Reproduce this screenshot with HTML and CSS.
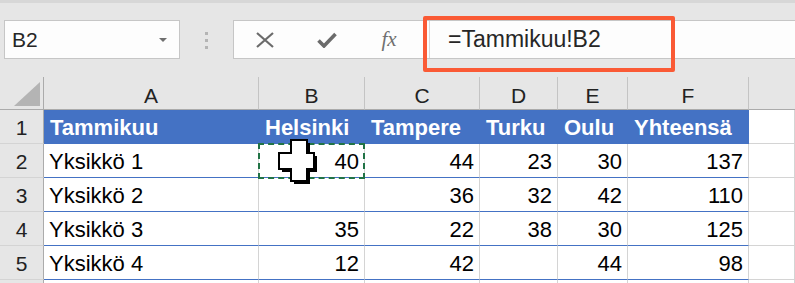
FILE: index.html
```html
<!DOCTYPE html>
<html lang="fi">
<head>
    <meta charset="UTF-8">
    <meta name="viewport" content="width=device-width, initial-scale=1.0">
    <title>Tammikuu</title>
    <link rel="stylesheet" href="styles.css">
</head>
<body>
<div class="app">
    <!-- Formula bar -->
    <div class="toolbar">
        <div class="name-box">
            <span>B2</span>
            <span class="caret"></span>
        </div>
        <div class="grip">
            <span></span><span></span><span></span>
        </div>
        <div class="formula-box">
            <div class="fbtn">
                <svg width="18" height="16" viewBox="0 0 18 16"><path d="M1 1 L17 15 M17 1 L1 15" stroke="#6b6b6b" stroke-width="2.2" fill="none"/></svg>
            </div>
            <div class="fbtn">
                <svg width="20" height="16" viewBox="0 0 20 16"><path d="M1.5 8.5 L7 14 L18.5 2" stroke="#6b6b6b" stroke-width="3.6" fill="none"/></svg>
            </div>
            <div class="fbtn fx">fx</div>
            <div class="formula-input">=Tammikuu!B2</div>
        </div>
    </div>

    <!-- Sheet -->
    <div class="grid">
        <div class="cell corner"><span class="tri"></span></div>
        <div class="cell col-head">A</div>
        <div class="cell col-head">B</div>
        <div class="cell col-head">C</div>
        <div class="cell col-head">D</div>
        <div class="cell col-head">E</div>
        <div class="cell col-head">F</div>
        <div class="cell col-head last"></div>

        <div class="cell row-head">1</div>
        <div class="cell th">Tammikuu</div>
        <div class="cell th">Helsinki</div>
        <div class="cell th">Tampere</div>
        <div class="cell th">Turku</div>
        <div class="cell th">Oulu</div>
        <div class="cell th">Yhteensä</div>
        <div class="cell"></div>

        <div class="cell row-head">2</div>
        <div class="cell td">Yksikkö 1</div>
        <div class="cell td num">40</div>
        <div class="cell td num">44</div>
        <div class="cell td num">23</div>
        <div class="cell td num">30</div>
        <div class="cell td num">137</div>
        <div class="cell"></div>

        <div class="cell row-head">3</div>
        <div class="cell td">Yksikkö 2</div>
        <div class="cell td num"></div>
        <div class="cell td num">36</div>
        <div class="cell td num">32</div>
        <div class="cell td num">42</div>
        <div class="cell td num">110</div>
        <div class="cell"></div>

        <div class="cell row-head">4</div>
        <div class="cell td">Yksikkö 3</div>
        <div class="cell td num">35</div>
        <div class="cell td num">22</div>
        <div class="cell td num">38</div>
        <div class="cell td num">30</div>
        <div class="cell td num">125</div>
        <div class="cell"></div>

        <div class="cell row-head">5</div>
        <div class="cell td">Yksikkö 4</div>
        <div class="cell td num">12</div>
        <div class="cell td num">42</div>
        <div class="cell td num"></div>
        <div class="cell td num">44</div>
        <div class="cell td num">98</div>
        <div class="cell"></div>

        <div class="cell row-head"></div>
        <div class="cell"></div>
        <div class="cell"></div>
        <div class="cell"></div>
        <div class="cell"></div>
        <div class="cell"></div>
        <div class="cell"></div>
        <div class="cell"></div>
    </div>

    <!-- Overlays -->
    <div class="highlight"></div>
    <svg class="cursor" width="46" height="52" viewBox="0 0 46 52">
        <polygon points="18,6 34,6 34,19 41,19 41,35 34,35 34,47 18,47 18,35 6,35 6,19 18,19" fill="#000"/>
        <polygon points="15,3 31,3 31,16 38,16 38,32 31,32 31,44 15,44 15,32 3,32 3,16 15,16" fill="#fff" stroke="#000" stroke-width="2"/>
    </svg>
</div>
</body>
</html>
```

FILE: styles.css
```css
* {
    box-sizing: border-box;
}

body {
    margin: 0;
    background-color: #e6e6e6;
    font-family: "Liberation Sans", Arial, sans-serif;
    overflow: hidden;
}

.app {
    position: relative;
    width: 795px;
    height: 283px;
    overflow: hidden;
}

/* Formula bar */
.toolbar {
    display: flex;
    align-items: flex-start;
    height: 77px;
    padding: 17px 0 0 4px;
    border-top: 3px solid #d7d7d7;
}

.name-box {
    display: flex;
    align-items: center;
    justify-content: space-between;
    width: 176px;
    height: 39px;
    padding: 0 12px 0 7px;
    background-color: #fdfdfd;
    border: 1px solid #c6c6c6;
    font-size: 21px;
    color: #262626;
}

.caret {
    width: 0;
    height: 0;
    border-left: 4px solid transparent;
    border-right: 4px solid transparent;
    border-top: 4px solid #6f6f6f;
}

.grip {
    display: flex;
    flex-direction: column;
    align-items: center;
    gap: 4px;
    width: 53px;
    padding-top: 12px;
}

.grip span {
    width: 3px;
    height: 3px;
    background-color: #b4b4b4;
}

.formula-box {
    display: flex;
    align-items: center;
    flex: 1;
    height: 39px;
    margin-right: -4px;
    background-color: #fdfdfd;
    border: 1px solid #c6c6c6;
}

.fbtn {
    display: flex;
    align-items: center;
    justify-content: center;
    width: 62px;
    height: 100%;
}

.fx {
    width: 71px;
    padding-right: 9px;
    font-family: "Liberation Serif", "Times New Roman", serif;
    font-style: italic;
    font-size: 21px;
    color: #707070;
}

.formula-input {
    flex: 1;
    height: 100%;
    padding-left: 18px;
    border-left: 1px solid #d9d9d9;
    font-size: 23px;
    line-height: 37px;
    color: #262626;
}

/* Sheet grid */
.grid {
    display: grid;
    grid-template-columns: 44px 215px 106px 115px 78px 70px 121px 1fr;
    grid-template-rows: 33px repeat(6, 34px);
}

.cell {
    padding: 2px 5px 0;
    background-color: #fff;
    border-right: 1px solid #d4d4d4;
    border-bottom: 1px solid #d4d4d4;
    font-size: 22px;
    line-height: 32px;
    white-space: nowrap;
    overflow: hidden;
    color: #000;
}

.corner {
    display: flex;
    justify-content: flex-end;
    align-items: flex-end;
    padding: 0 3px 3px 0;
    background-color: #e6e6e6;
    border-right-color: #ababab;
    border-bottom-color: #ababab;
}

.tri {
    width: 0;
    height: 0;
    border-left: 26px solid transparent;
    border-bottom: 24px solid #b4b4b4;
}

.col-head {
    background-color: #e6e6e6;
    border-right-color: #c4c4c4;
    border-bottom-color: #ababab;
    text-align: center;
    font-size: 21px;
    padding-top: 3px;
    color: #222;
}

.col-head.last {
    border-right: none;
}

.row-head {
    padding: 2px 0 0;
    background-color: #e6e6e6;
    border-right-color: #ababab;
    text-align: center;
    font-size: 21px;
    color: #222;
}

.th {
    background-color: #4472c4;
    border-right-color: #4472c4;
    border-bottom-color: #4472c4;
    color: #fff;
    font-weight: bold;
    padding-left: 6px;
}

.td {
    border-bottom-color: #4472c4;
}

.num {
    text-align: right;
}

/* Copy marquee, cursor and callout */
.highlight {
    position: absolute;
    left: 258px;
    top: 143px;
    width: 107px;
    height: 36px;
    border: 2px dashed #217346;
}

.cursor {
    position: absolute;
    left: 276px;
    top: 137px;
}

.app::after {
    content: "";
    position: absolute;
    left: 423px;
    top: 16px;
    width: 244px;
    height: 48px;
    border: 4px solid #fa5a35;
    border-radius: 2px;
}
```
